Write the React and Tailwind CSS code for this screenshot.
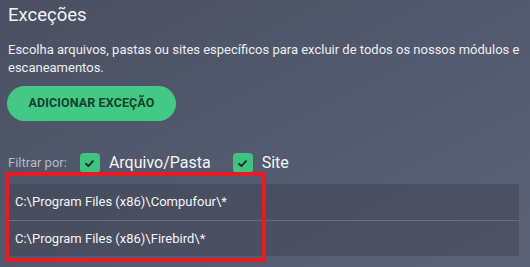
import React, { useState } from "react";

const paths = [
  "C:\\Program Files (x86)\\Compufour\\*",
  "C:\\Program Files (x86)\\Firebird\\*",
];

function Check({ checked, onClick }) {
  return (
    <button
      onClick={onClick}
      className={`w-5 h-5 rounded-[4px] flex items-center justify-center ${
        checked ? "bg-[#3fc47f]" : "bg-[#6a7183]"
      }`}
    >
      {checked && (
        <svg viewBox="0 0 12 12" className="w-[11px] h-[11px]">
          <path
            d="M2.2 6.3 L4.8 8.8 L9.8 3.4"
            fill="none"
            stroke="#1a2a22"
            strokeWidth="2"
            strokeLinecap="round"
            strokeLinejoin="round"
          />
        </svg>
      )}
    </button>
  );
}

const App = () => {
  const [files, setFiles] = useState(true);
  const [sites, setSites] = useState(true);

  return (
    <div
      className="w-[530px] h-[267px] overflow-hidden bg-linear-to-br from-[#4a5062] to-[#5c6378] text-white px-2 pt-[2px]"
      style={{ fontFamily: "Roboto, 'Noto Sans', sans-serif" }}
    >
      <h2 className="text-[18.5px] leading-[26px] text-[#f2f3f5]">Exceções</h2>
      <p className="mt-[13px] text-[13px] leading-[18px] text-[#eceef2]">
        Escolha arquivos, pastas ou sites específicos para excluir de todos os
        nossos módulos e escaneamentos.
      </p>
      <button className="mt-[9px] -ml-[1px] h-[35px] w-[169px] rounded-full bg-[#44c886] text-[#16412b] text-[12.5px] font-bold tracking-[0.1px]">
        ADICIONAR EXCEÇÃO
      </button>

      <div className="mt-[32px] flex items-center h-5">
        <span className="text-[13px] text-[#b4b9c4] mr-[13px]">Filtrar por:</span>
        <Check checked={files} onClick={() => setFiles(!files)} />
        <span className="ml-[9px] text-[16px] text-[#f4f5f7]">Arquivo/Pasta</span>
        <span className="ml-[22px]">
          <Check checked={sites} onClick={() => setSites(!sites)} />
        </span>
        <span className="ml-[9px] text-[16px] text-[#f4f5f7]">Site</span>
      </div>

      <div className="relative mt-[11px] w-[511px]">
        {paths.map((p, i) => (
          <div
            key={p}
            className={`h-[36px] flex items-center pl-[7px] bg-[#3c414f]/45 text-[13px] text-[#f3f4f6] ${
              i > 0 ? "border-t border-[#676e7e]" : ""
            }`}
          >
            {p}
          </div>
        ))}
        {/* red highlight box */}
        <div className="absolute left-[-3px] top-[-12px] w-[261px] h-[90px] border-[4px] border-[#e31c26] pointer-events-none" />
      </div>
    </div>
  );
};

export default App;
